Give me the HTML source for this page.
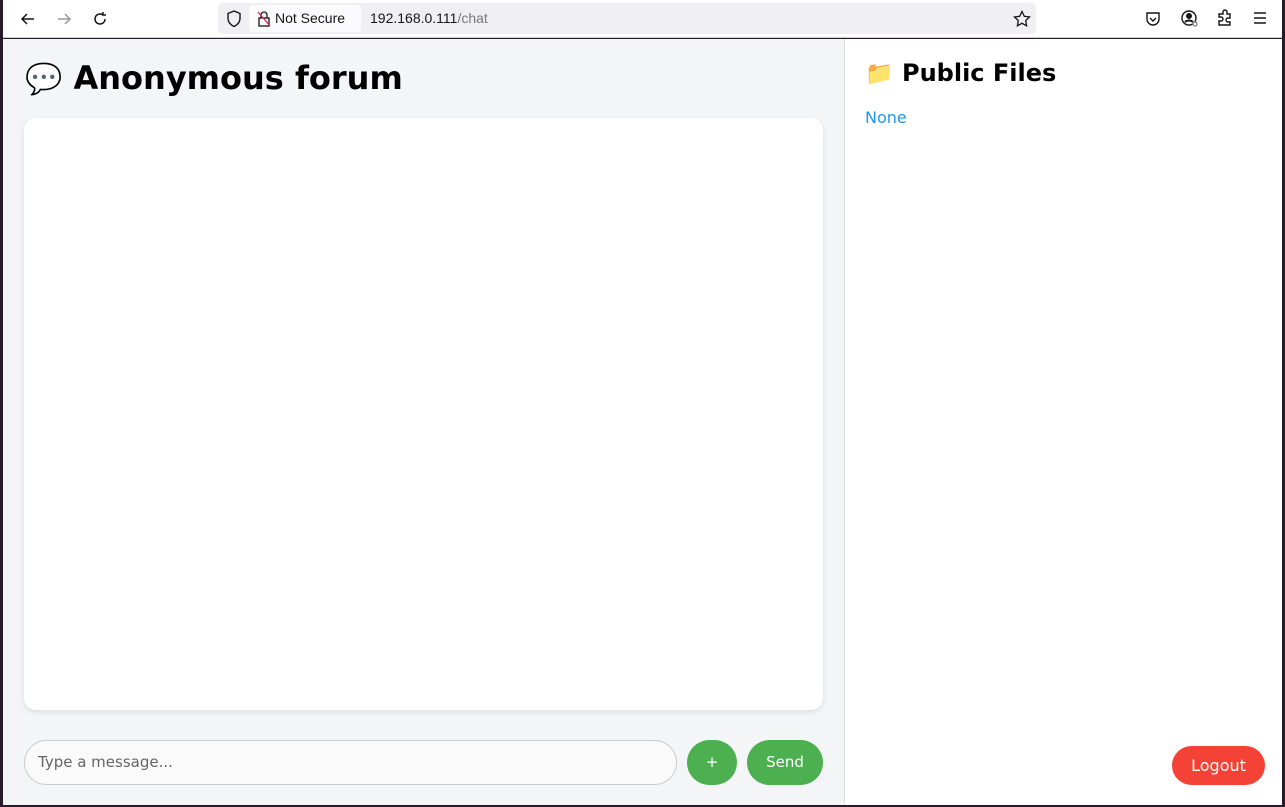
<!DOCTYPE html>
<html><head><meta charset="utf-8"><style>
*{box-sizing:border-box;margin:0;padding:0}
body{width:1285px;height:807px;background:#2a1a2a;position:relative;overflow:hidden;font-family:"DejaVu Sans","Liberation Sans",sans-serif}
#tb{position:absolute;left:3px;top:0;width:1279px;height:38px;background:#fff;border-bottom:1px solid #cfcfd8}
#url{position:absolute;left:215px;top:3px;width:818px;height:31px;background:#f0f0f4;border-radius:5px}
#ns{position:absolute;left:31px;top:2px;width:112px;height:27px;background:#fbfbfe;border-radius:4px;font:14px "Liberation Sans",sans-serif;color:#15141a;line-height:27px;padding-left:26px}
#addr{position:absolute;left:152px;top:0;font:14px "Liberation Sans",sans-serif;line-height:31px;color:#15141a}
#left{position:absolute;left:3px;top:39px;width:841px;height:766px;background:#f4f5f7}
#right{position:absolute;left:844px;top:39px;width:438px;height:766px;background:#fff;border-left:1px solid #ddd}
h1{position:absolute;left:22px;top:20px;font-size:32px;font-weight:bold;color:#000}
#box{position:absolute;left:21px;top:79px;width:799px;height:592px;background:#fff;border-radius:12px;box-shadow:0 2px 6px rgba(0,0,0,.1)}
#inp{position:absolute;left:21px;top:701px;width:653px;height:45px;border:1px solid #ccc;border-radius:23px;background:#fafafa;font-size:15px;color:#666;line-height:43px;padding-left:13px}
.btn{position:absolute;background:#4caf50;color:#fff;border-radius:23px;text-align:center;font-size:15px}
h2{position:absolute;left:20px;top:20px;font-size:24px;font-weight:bold}
#none{position:absolute;left:20px;top:69px;font-size:16px;color:#2196f3}
#lo{position:absolute;left:327px;top:707px;width:93px;height:39px;background:#f44336;color:#fff;border-radius:20px;text-align:center;line-height:39px;font-size:16px}
svg{position:absolute}
</style></head><body>
<div id="tb">
<svg style="left:16px;top:10px" width="18" height="18" viewBox="0 0 18 18" fill="none" stroke="#15141a" stroke-width="1.5"><path d="M15 9H3M8 4L3 9l5 5"/></svg>
<svg style="left:52px;top:10px" width="18" height="18" viewBox="0 0 18 18" fill="none" stroke="#999" stroke-width="1.5"><path d="M3 9h12M10 4l5 5-5 5"/></svg>
<svg style="left:88px;top:10px" width="18" height="18" viewBox="0 0 18 18" fill="none" stroke="#15141a" stroke-width="1.5"><path d="M14 9a5 5 0 1 1-2-4M12 2v3h3"/></svg>
<div id="url">
<svg style="left:8px;top:7px" width="16" height="18" viewBox="0 0 16 18" fill="none" stroke="#15141a" stroke-width="1.4"><path d="M8 1L2 3.5v5c0 4 3 6.5 6 8 3-1.5 6-4 6-8v-5z"/></svg>
<div id="ns">Not Secure
<svg style="left:8px;top:6px" width="14" height="16" viewBox="0 0 14 16" fill="none" stroke="#15141a" stroke-width="1.3"><rect x="2" y="7" width="10" height="8"/><path d="M4 7V4a3 3 0 0 1 6 0v3"/><path d="M1 1l12 14" stroke="#e22850"/></svg></div>
<div id="addr">192.168.0.111<span style="color:#777">/chat</span></div>
<svg style="left:795px;top:7px" width="18" height="18" viewBox="0 0 18 18" fill="none" stroke="#15141a" stroke-width="1.3"><path d="M9 1.5l2.3 4.8 5.2.7-3.8 3.6.9 5.2L9 13.3l-4.6 2.5.9-5.2L1.5 7l5.2-.7z"/></svg>
</div>
<svg style="left:1141px;top:10px" width="18" height="18" viewBox="0 0 18 18" fill="none" stroke="#15141a" stroke-width="1.4"><path d="M3 3h12v6a6 6 0 0 1-12 0z"/><path d="M6 8l3 3 3-3"/></svg>
<svg style="left:1177px;top:9px" width="20" height="20" viewBox="0 0 20 20" fill="none" stroke="#15141a" stroke-width="1.4"><circle cx="9" cy="9" r="7"/><circle cx="9" cy="7" r="2.3" fill="#15141a"/><path d="M5 13c2-2 6-2 8 0" stroke-width="2"/><circle cx="15" cy="15" r="2" fill="#fff" stroke="#888"/></svg>
<svg style="left:1213px;top:9px" width="18" height="18" viewBox="0 0 18 18" fill="none" stroke="#15141a" stroke-width="1.4"><path d="M3 5h4V3a2 2 0 0 1 4 0v2h3v4h-2a2 2 0 0 0 0 4h2v3H3v-4h2a2 2 0 0 0 0-4H3z"/></svg>
<svg style="left:1249px;top:10px" width="16" height="16" viewBox="0 0 16 16" stroke="#15141a" stroke-width="1.4"><path d="M2 3h12M2 8h12M2 13h12"/></svg>
</div>
<div id="left">
<h1><span style="font-size:30px">💬</span> Anonymous forum</h1>
<div id="box"></div>
<div id="inp">Type a message...</div>
<div class="btn" style="left:684px;top:701px;width:50px;height:45px;line-height:45px">+</div>
<div class="btn" style="left:744px;top:701px;width:76px;height:45px;line-height:45px">Send</div>
</div>
<div id="right">
<h2><span style="font-size:23px">📁</span> Public Files</h2>
<div id="none">None</div>
<div id="lo">Logout</div>
</div>
</body></html>
